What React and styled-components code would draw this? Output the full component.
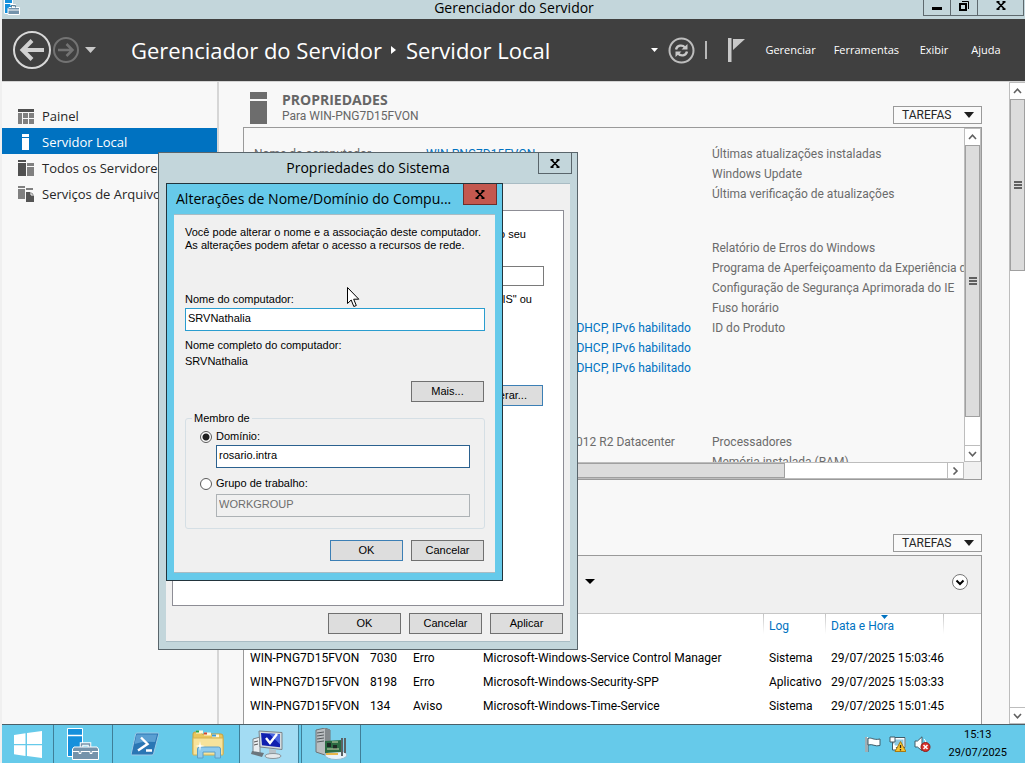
import React from 'react';
import styled, { createGlobalStyle, css } from 'styled-components';

const ui = '"Open Sans", "Noto Sans", sans-serif';
const small = 'Roboto, "Open Sans", sans-serif';
const classic = '"Liberation Sans", Arial, sans-serif';

const c = {
  frame: '#c3d6db',
  dark: '#404040',
  page: '#f8f8f8',
  face: '#f0f0f0',
  blue: '#0072c1',
  sky: '#66caea',
  line: '#9a9a9a',
  bar: '#dcdcdc',
};

const GlobalStyle = createGlobalStyle`
  *, *::before, *::after { box-sizing: border-box; }
  body { margin: 0; background: ${c.face}; font-family: ${small}; font-size: 12px; color: #000; }
  button, input { font: inherit; color: inherit; margin: 0; border-radius: 0; }
  svg { display: block; flex: none; }
`;

const Desktop = styled.div`
  position: relative;
  display: flex;
  flex-direction: column;
  height: 100vh;
  padding-left: 2px;
  overflow: hidden;
`;

/* ---------- server manager window ---------- */
const TitleBar = styled.header`
  display: grid;
  grid-template-columns: 1fr auto 1fr;
  height: 19px;
  flex: none;
  padding: 0 1px 0 2px;
  background: ${c.frame};
`;
const WindowTitle = styled.h1`
  margin: 0;
  font: 400 14px/16px ${ui};
`;
const WindowButtons = styled.div`
  display: flex;
  justify-self: end;
  height: 16px;
`;
const WindowButton = styled.button`
  display: flex;
  align-items: center;
  justify-content: center;
  width: ${(p) => (p.$wide ? 47 : 28)}px;
  margin-left: -1px;
  padding: 0 0 4px;
  border: 1px solid #5e696e;
  border-top: 0;
  background: transparent;
`;

const NavBar = styled.nav`
  display: flex;
  align-items: center;
  flex: none;
  height: 62px;
  padding: 0 22px 0 10px;
  background: ${c.dark};
  color: #fff;
`;
const NavButton = styled.button`
  display: flex;
  align-items: center;
  padding: 0;
  border: 0;
  background: none;
  margin-right: ${(p) => p.$gap || 0}px;
`;
const Crumbs = styled.div`
  display: flex;
  align-items: center;
  gap: 9px;
  flex: 1;
  margin-left: 35px;
  font: 400 22px/30px ${ui};
  white-space: nowrap;
`;
const Divider = styled.span`
  width: 2px;
  height: 18px;
  background: #b8b8b8;
  margin-right: 21px;
`;
const Menu = styled.div`
  display: flex;
  gap: 18px;
  margin-left: 20px;
`;
const MenuItem = styled.button`
  min-width: 34px;
  padding: 0;
  border: 0;
  background: none;
  font: 400 11px/18px ${ui};
  color: #fff;
`;

const Body = styled.div`
  display: flex;
  flex: 1;
  min-height: 0;
  border-top: 1px solid #d4d4d4;
  background: ${c.page};
`;
const Sidebar = styled.aside`
  flex: none;
  width: 217px;
  padding-top: 20px;
  border-right: 2px solid #d6d6d6;
`;
const SideLink = styled.a`
  display: flex;
  align-items: center;
  gap: 8px;
  height: 26px;
  padding: 2px 0 0 16px;
  font: 400 13px/18px ${ui};
  white-space: nowrap;
  text-decoration: none;
  color: ${(p) => (p.$active ? '#fff' : '#262626')};
  background: ${(p) => (p.$active ? c.blue : 'transparent')};
`;
const Content = styled.main`
  flex: 1;
  min-width: 0;
  padding: 9px 27px 0 24px;
  overflow: hidden;
`;
const PanelHead = styled.div`
  display: flex;
  align-items: flex-end;
  gap: 15px;
  height: ${(p) => (p.$spaced ? 75 : 36)}px;
  padding: 0 0 3px 7px;
`;
const PanelTitle = styled.div`
  flex: 1;
  align-self: flex-start;
  color: #666;
`;
const PanelName = styled.h2`
  margin: 0;
  font: 700 14px/17px ${ui};
`;
const PanelSub = styled.div`
  font: 400 12px/17px ${small};
`;
const TasksButton = styled.button`
  display: flex;
  align-items: center;
  justify-content: space-between;
  width: 89px;
  height: 18px;
  margin-left: auto;
  padding: 0 7px 0 8px;
  border: 1px solid ${c.line};
  background: #fafafa;
  color: #262626;
`;

const PropertyPanel = styled.section`
  display: grid;
  grid-template: minmax(0, 1fr) 17px / minmax(0, 1fr) 17px;
  height: 353px;
  border: 1px solid ${c.line};
`;
const Properties = styled.div`
  overflow: hidden;
  padding: 16px 0 0 10px;
`;
const PropertyGroup = styled.div`
  margin-bottom: 34px;
`;
const PropertyRow = styled.div`
  display: grid;
  grid-template-columns: 172px 286px 1fr;
  height: 20px;
  line-height: 20px;
  white-space: nowrap;
  color: #6b6b6b;
`;
const PropLink = styled.a`
  color: ${c.blue};
  text-decoration: none;
`;

const ScrollBar = styled.div`
  display: flex;
  flex: none;
  flex-direction: ${(p) => (p.$horizontal ? 'row' : 'column')};
  ${(p) => (p.$horizontal ? 'height: 17px' : `width: ${p.$page ? 16 : 17}px`)};
  border: 1px solid #bdbdbd;
  border-right-width: ${(p) => (p.$page ? 0 : 1)}px;
  background: #fff;
`;
const ScrollArrow = styled.button`
  display: flex;
  align-items: center;
  justify-content: center;
  flex: none;
  ${(p) => (p.$horizontal ? 'width: 16px' : 'height: 16px')};
  padding: 0;
  border: 0 solid #bdbdbd;
  ${(p) => (p.$horizontal ? 'border-left-width: 1px' : p.$end && 'border-top-width: 1px')};
  background: #fff;
`;
const Thumb = styled.div`
  display: flex;
  align-items: center;
  justify-content: center;
  flex: none;
  border: 1px solid #a0a0a0;
  background: ${c.bar};
  ${(p) => (p.$horizontal ? css`width: ${p.$size};` : css`height: ${p.$size};`)}
`;
const Filler = styled.div`
  flex: 1;
`;
const Corner = styled.div`
  background: ${c.face};
`;

const EventPanel = styled.section`
  border: 1px solid ${c.line};
  background: #fff;
  height: 400px;
`;
const FilterBar = styled.div`
  display: flex;
  align-items: center;
  justify-content: space-between;
  height: 58px;
  padding: 0 12px 6px 341px;
  border-bottom: 1px solid #c6c6c6;
  background: ${c.face};
`;
const EventTable = styled.table`
  width: 100%;
  table-layout: fixed;
  border-collapse: collapse;
  white-space: nowrap;
`;
const HeadCell = styled.th`
  position: relative;
  width: ${(p) => (p.$w ? p.$w + 'px' : 'auto')};
  height: 32px;
  padding: 0 0 8px 6px;
  text-align: left;
  font-weight: 400;
  color: ${c.blue};
  background: ${(p) => (p.$rule ? 'linear-gradient(#c4c4c4, #fff) no-repeat left top / 1px 20px' : 'none')};
`;
const SortMark = styled.svg`
  position: absolute;
  top: 1px;
  left: 56px;
`;
const Cell = styled.td`
  height: 24px;
  padding: 0 0 0 6px;
`;

/* ---------- dialogs ---------- */
const Dialog = styled.section`
  position: absolute;
  display: flex;
  flex-direction: column;
  padding: 0 7px 7px;
  border: 1px solid;
  font: 400 11px/13px ${classic};
  ${(p) =>
    p.$active
      ? css`left: 166px; top: 183px; width: 337px; height: 398px; background: ${c.sky}; border-color: #22343c;`
      : css`left: 158px; top: 152px; width: 420px; height: 498px; background: ${c.frame}; border-color: #59656b;`}
`;
const DialogBar = styled.header`
  display: flex;
  position: relative;
  height: 30px;
  flex: none;
  justify-content: ${(p) => (p.$left ? 'flex-start' : 'center')};
  padding-left: ${(p) => (p.$left ? 2 : 0)}px;
`;
const DialogTitle = styled.h2`
  margin: 0;
  font: 400 14px/30px ${ui};
  white-space: nowrap;
`;
const CloseButton = styled.button`
  position: absolute;
  top: 0;
  right: -2px;
  display: flex;
  align-items: center;
  justify-content: center;
  width: 34px;
  height: 21px;
  padding: 0;
  border: 1px solid ${(p) => (p.$red ? '#6e2f2c' : '#59656b')};
  border-top: 0;
  background: ${(p) => (p.$red ? '#c3584f' : 'transparent')};
`;
const Client = styled.div`
  display: flex;
  flex-direction: column;
  flex: 1;
  border: solid #a9bcc4;
  border-width: 1px 0;
  background: ${c.face};
  padding: ${(p) => p.$pad};
`;
const TabPage = styled.div`
  display: flex;
  flex-direction: column;
  align-items: flex-end;
  height: 396px;
  padding: 17px 19px 0 0;
  border: 1px solid #8d8d95;
  background: #fff;
`;
const TabText = styled.p`
  margin: 0;
  padding-right: ${(p) => p.$inset}px;
  white-space: nowrap;
`;
const TabInput = styled.input`
  width: 230px;
  height: 20px;
  margin: 25px 0 7px;
  border: 1px solid #7a7a7a;
  background: #fff;
`;
const TabAction = styled.div`
  margin: 79px 1px 0 0;
`;
const ButtonRow = styled.div`
  display: flex;
  justify-content: flex-end;
  gap: 8px;
  padding-right: 1px;
  margin-top: ${(p) => p.$top}px;
`;
const Push = styled.button`
  width: 73px;
  height: 21px;
  padding: 0;
  border: 1px solid ${(p) => (p.$default ? '#3c7fb5' : '#707070')};
  background: #dddddd;
`;
const Intro = styled.p`
  margin: 0 0 41px;
  white-space: nowrap;
`;
const TextBox = styled.input`
  display: block;
  width: 100%;
  height: 23px;
  padding: 0 2px 4px;
  border: 1px solid ${(p) => (p.$focus ? '#2a9dcf' : '#2b618f')};
  background: #fff;
  outline: 0;
  &:disabled { border-color: #adb2b5; background: ${c.face}; color: #6d6d6d; }
`;
const FieldLabel = styled.label`
  display: block;
  margin-bottom: 2px;
`;
const FullName = styled.p`
  margin: 6px 0 12px;
  line-height: 16px;
`;
const Group = styled.fieldset`
  margin: 10px 0 0;
  min-width: 0;
  padding: 5px 14px 11px;
  border: 1px solid #d5dfe5;
  border-radius: 3px;
`;
const Legend = styled.legend`
  margin-left: -8px;
  padding: 0 2px;
`;
const Choice = styled.label`
  display: flex;
  align-items: center;
  gap: 4px;
  height: 13px;
`;
const Radio = styled.input`
  appearance: none;
  flex: none;
  width: 12px;
  height: 12px;
  border: 1px solid #5a5a5a;
  border-radius: 50%;
  background: #fff;
  &:checked { background: radial-gradient(circle, #202020 0 3px, #fff 4px); }
`;
const ChoiceField = styled.div`
  padding-left: 16px;
  margin: ${(p) => (p.$after ? 2 : 4)}px 0 ${(p) => p.$after}px;
`;
const Pointer = styled.svg`
  position: absolute;
  left: 347px;
  top: 287px;
`;

/* ---------- taskbar ---------- */
const TaskBar = styled.footer`
  display: flex;
  flex: none;
  height: 39px;
  border-top: 1px solid #4b5f68;
  background: ${c.sky};
`;
const TaskButton = styled.button`
  display: flex;
  align-items: center;
  justify-content: center;
  width: ${(p) => p.$w || 60}px;
  padding: 0;
  margin-left: ${(p) => (p.$gap ? 3 : 0)}px;
  border: 0 solid #3f7f98;
  border-width: 0 ${(p) => (p.$edge ? 1 : 0)}px;
  margin-right: ${(p) => (p.$edge ? -1 : 0)}px;
  background: ${(p) => (p.$tone || 'transparent')};
`;
const Tray = styled.div`
  display: flex;
  align-items: center;
  gap: 8px;
  margin-left: auto;
  padding-right: 18px;
`;
const Clock = styled.time`
  margin-left: 9px;
  font-size: 11px;
  line-height: 18px;
  text-align: center;
`;

/* ---------- drawings ---------- */
const Down = ({ w = 10, h = 6, fill = '#1e1e1e' }) => (
  <svg width={w} height={h}><path d={`M0 0H${w}L${w / 2} ${h}Z`} fill={fill} /></svg>
);
const Cross = () => (
  <svg width="10" height="9"><path d="M1.5 1 8.5 8M8.5 1 1.5 8M.5 .8h3M6.5 .8h3M.5 8.2h3M6.5 8.2h3" stroke="#000" strokeWidth="1.7" /></svg>
);
const chevrons = { up: 'M1 6 4.5 2.2 8 6', down: 'M1 2 4.5 5.8 8 2', right: 'M2.5 .5 6 4 2.5 7.5' };
const Chevron = ({ dir }) => (
  <svg width="9" height="8"><path d={chevrons[dir]} fill="none" stroke="#606060" strokeWidth="1.6" /></svg>
);
const Grip = () => (
  <svg width="8" height="8"><path d="M0 1h8M0 4h8M0 7h8" stroke="#606060" strokeWidth="2" /></svg>
);
const ManagerIcon = ({ w, h, top = 0 }) => (
  <svg width={w} height={h} viewBox={`0 ${top} 32 ${32 - top}`}>
    <path d="M.5 .5h15v28H.5z" fill="#1590dc" stroke="#fff" />
    <path d="M0 7.5h16" stroke="#fff" strokeWidth="1.5" />
    <path d="M14.500 20v-4h8v4" fill="none" stroke="#fff" strokeWidth="3.500" />
    <path d="M14.500 20v-4h8v4" fill="none" stroke="#7493ab" strokeWidth="1.500" />
    <path d="M7 19h23l1.500 2v10.500h-26V21z" fill="#7493ab" stroke="#fff" />
    <path d="M5.500 23.500H12v2h2v-2h9v2h2v-2h6.500" fill="none" stroke="#fff" />
  </svg>
);
const TitleIcon = () => (
  <svg width="17" height="15">
    <path d="M.5 -2h8v15.500h-8z" fill="#1590dc" stroke="#fff" />
    <path d="M0 3.500h9" stroke="#fff" />
    <path d="M6.500 5.500v-1h5v2" fill="none" stroke="#fff" />
    <path d="M5 7.500h10.500v7H4v-6z" fill="#7493ab" stroke="#fff" />
    <path d="M7.500 7.500v-2h4v2" fill="none" stroke="#5e7e97" />
    <path d="M4 10h12" stroke="#fff" />
  </svg>
);
const ServerIcon = ({ fill = '#6d6d6d', w = 17, h = 32 }) => (
  <svg width={w} height={h}><path d={h > 20 ? `M0 0h${w}v7H0zM0 9h${w}v23H0z` : 'M4 0h7v3H4zM4 4h7v12H4z'} fill={fill} /></svg>
);
const PanelIcon = () => (
  <svg width="16" height="15"><path d="M0 0h16v3H0z" fill="#505050" /><path d="M0 4h4v11H0zM5 4h5v5H5zM11 4h5v5h-5zM5 10h5v5H5zM11 10h5v5h-5z" fill="#808080" /></svg>
);
const AllIcon = () => (
  <svg width="16" height="16"><path d="M0 0h8v2H0zM0 3h8v13H0z" fill="#505050" /><path d="M9 3h7v3H9zM9 7h7v9H9z" fill="#808080" /></svg>
);
const FilesIcon = () => (
  <svg width="16" height="16"><path d="M0 0h7v2H0zM0 3h7v10H0zM8 2h7v2H8z" fill="#808080" /><path d="M8 6h5l3 3v7H8z" fill="#555" /><path d="M13 6v3h3" fill="none" stroke="#fff" /></svg>
);

const rows = [
  ['7030', 'Erro', 'Microsoft-Windows-Service Control Manager', 'Sistema', '29/07/2025 15:03:46'],
  ['8198', 'Erro', 'Microsoft-Windows-Security-SPP', 'Aplicativo', '29/07/2025 15:03:33'],
  ['134', 'Aviso', 'Microsoft-Windows-Time-Service', 'Sistema', '29/07/2025 15:01:45'],
];
const dhcp = 'Endereço IPv4 atribuído por DHCP, IPv6 habilitado';
const groups = [
  [
    ['Nome do computador', 'WIN-PNG7D15FVON', 'Últimas atualizações instaladas'],
    ['', '', 'Windows Update'],
    ['', '', 'Última verificação de atualizações'],
  ],
  [
    ['', '', 'Relatório de Erros do Windows'],
    ['', '', 'Programa de Aperfeiçoamento da Experiência do Usuário'],
    ['', '', 'Configuração de Segurança Aprimorada do IE'],
    ['', '', 'Fuso horário'],
    ['', dhcp, 'ID do Produto'],
    ['', dhcp, ''],
    ['', dhcp, ''],
    ['', '', ''],
  ],
  [
    ['', 'Microsoft Windows Server 2012 R2 Datacenter', 'Processadores', true],
    ['', '', 'Memória instalada (RAM)'],
  ],
];

const Tasks = () => <TasksButton>TAREFAS <Down /></TasksButton>;

function ServerManager() {
  return (
    <>
      <TitleBar>
        <TitleIcon />
        <WindowTitle>Gerenciador do Servidor</WindowTitle>
        <WindowButtons>
          <WindowButton aria-label="Minimizar"><svg width="10" height="9"><path d="M0 7.500h10" stroke="#000" strokeWidth="3" /></svg></WindowButton>
          <WindowButton aria-label="Restaurar"><svg width="10" height="10"><path d="M1 3h6v6H1z" fill="none" stroke="#000" strokeWidth="2" /><path d="M3 .5h6.500V8" fill="none" stroke="#000" /></svg></WindowButton>
          <WindowButton $wide aria-label="Fechar"><Cross /></WindowButton>
        </WindowButtons>
      </TitleBar>
      <NavBar>
        <NavButton $gap={1} aria-label="Voltar">
          <svg width="40" height="40"><circle cx="20" cy="20" r="18" fill="none" stroke="#d8d8d8" strokeWidth="2" /><path d="M32 20H11M20 10.500 10.500 20 20 29.500" fill="none" stroke="#d0d0d0" strokeWidth="4" /></svg>
        </NavButton>
        <NavButton $gap={6} aria-label="Avançar">
          <svg width="26" height="26"><circle cx="13" cy="13" r="12" fill="none" stroke="#737373" strokeWidth="2" /><path d="M5 13h14M13.500 7l6 6-6 6" fill="none" stroke="#737373" strokeWidth="2.500" /></svg>
        </NavButton>
        <NavButton aria-label="Histórico"><Down w={11} h={6} fill="#c8c8c8" /></NavButton>
        <Crumbs>
          <span>Gerenciador do Servidor</span>
          <svg width="6" height="8"><path d="M0 0 5 4 0 8z" fill="#fff" /></svg>
          <span>Servidor Local</span>
        </Crumbs>
        <NavButton $gap={10} aria-label="Opções"><Down w={7} h={4} fill="#fff" /></NavButton>
        <NavButton $gap={10} aria-label="Atualizar">
          <svg width="27" height="27"><circle cx="13.500" cy="13.500" r="12" fill="none" stroke="#bdbdbd" strokeWidth="2" /><path d="M8 12.500c1-4.500 6.500-5 9-2M19 14.500c-1 4.500-6.500 5-9 2" fill="none" stroke="#c8c8c8" strokeWidth="2.400" /><path d="M19.500 7v5.500h-6zM7.500 20v-5.500h6z" fill="#c8c8c8" /></svg>
        </NavButton>
        <Divider />
        <NavButton aria-label="Notificações">
          <svg width="17" height="30"><path d="M0 3h3.500v24H0zM5 4h12L5 15z" fill="#c8c8c8" /></svg>
        </NavButton>
        <Menu>
          <MenuItem>Gerenciar</MenuItem>
          <MenuItem>Ferramentas</MenuItem>
          <MenuItem>Exibir</MenuItem>
          <MenuItem>Ajuda</MenuItem>
        </Menu>
      </NavBar>
      <Body>
        <Sidebar>
          <SideLink href="#painel"><PanelIcon />Painel</SideLink>
          <SideLink href="#local" $active><ServerIcon fill="#fff" w={16} h={16} />Servidor Local</SideLink>
          <SideLink href="#todos"><AllIcon />Todos os Servidores</SideLink>
          <SideLink href="#arquivo"><FilesIcon />Serviços de Arquivo</SideLink>
        </Sidebar>
        <Content>
          <PanelHead>
            <ServerIcon />
            <PanelTitle>
              <PanelName>PROPRIEDADES</PanelName>
              <PanelSub>Para WIN-PNG7D15FVON</PanelSub>
            </PanelTitle>
            <Tasks />
          </PanelHead>
          <PropertyPanel>
            <Properties>
              {groups.map((g, i) => (
                <PropertyGroup key={i}>
                  {g.map(([a, b, d, plain], j) => (
                    <PropertyRow key={j}>
                      <span>{a}</span>
                      <span>{plain || !b ? b : <PropLink href="#editar">{b}</PropLink>}</span>
                      <span>{d}</span>
                    </PropertyRow>
                  ))}
                </PropertyGroup>
              ))}
            </Properties>
            <ScrollBar>
              <ScrollArrow aria-label="Acima"><Chevron dir="up" /></ScrollArrow>
              <Thumb $size="272px"><Grip /></Thumb>
              <Filler />
              <ScrollArrow $end aria-label="Abaixo"><Chevron dir="down" /></ScrollArrow>
            </ScrollBar>
            <ScrollBar $horizontal>
              <ScrollArrow $horizontal aria-label="Esquerda" />
              <Thumb $horizontal $size="73%" />
              <Filler />
              <ScrollArrow $horizontal aria-label="Direita"><Chevron dir="right" /></ScrollArrow>
            </ScrollBar>
            <Corner />
          </PropertyPanel>
          <PanelHead $spaced><Tasks /></PanelHead>
          <EventPanel>
            <FilterBar>
              <Down w={10} h={5} fill="#000" />
              <svg width="18" height="18"><circle cx="9" cy="9" r="7.500" fill="#fff" stroke="#777" /><path d="M5.500 7.500 9 11l3.500-3.500" fill="none" stroke="#000" strokeWidth="2" /></svg>
            </FilterBar>
            <EventTable>
              <thead>
                <tr>
                  <HeadCell $w={120} /><HeadCell $w={43} /><HeadCell $w={70} /><HeadCell $w={286} />
                  <HeadCell $w={62} $rule>Log</HeadCell>
                  <HeadCell $w={118} $rule>Data e Hora<SortMark width="7" height="4"><path d="M0 0h7L3.500 4z" fill={c.blue} /></SortMark></HeadCell>
                  <HeadCell $rule />
                </tr>
              </thead>
              <tbody>
                {rows.map((r) => (
                  <tr key={r[0]}>
                    <Cell>WIN-PNG7D15FVON</Cell>
                    {r.map((t) => <Cell key={t}>{t}</Cell>)}
                    <Cell />
                  </tr>
                ))}
              </tbody>
            </EventTable>
          </EventPanel>
        </Content>
        <ScrollBar $page>
          <ScrollArrow aria-label="Acima"><Chevron dir="up" /></ScrollArrow>
          <Thumb $size="172px"><Grip /></Thumb>
          <Filler />
          <ScrollArrow $end aria-label="Abaixo"><Chevron dir="down" /></ScrollArrow>
        </ScrollBar>
      </Body>
    </>
  );
}

function SystemDialog() {
  return (
    <Dialog>
      <DialogBar>
        <DialogTitle>Propriedades do Sistema</DialogTitle>
        <CloseButton aria-label="Fechar"><Cross /></CloseButton>
      </DialogBar>
      <Client $pad="26px 6px 0">
        <TabPage>
          <TabText $inset={18}>O Windows usa as informações a seguir para identificar o seu</TabText>
          <TabInput aria-label="Descrição do computador" />
          <TabText $inset={12}>Por exemplo: "Servidor de Produção IIS" ou</TabText>
          <TabAction><Push $default>Alterar...</Push></TabAction>
        </TabPage>
        <ButtonRow $top={7}>
          <Push>OK</Push><Push>Cancelar</Push><Push>Aplicar</Push>
        </ButtonRow>
      </Client>
    </Dialog>
  );
}

function NameDialog() {
  return (
    <Dialog $active>
      <DialogBar $left>
        <DialogTitle>Alterações de Nome/Domínio do Compu...</DialogTitle>
        <CloseButton $red aria-label="Fechar"><Cross /></CloseButton>
      </DialogBar>
      <Client $pad="11px 10px 0 11px">
        <Intro>Você pode alterar o nome e a associação deste computador.<br />As alterações podem afetar o acesso a recursos de rede.</Intro>
        <FieldLabel htmlFor="pc">Nome do computador:</FieldLabel>
        <TextBox id="pc" $focus defaultValue="SRVNathalia" />
        <FullName>Nome completo do computador:<br />SRVNathalia</FullName>
        <ButtonRow $top={0}><Push>Mais...</Push></ButtonRow>
        <Group>
          <Legend>Membro de</Legend>
          <Choice><Radio type="radio" name="membro" defaultChecked />Domínio:</Choice>
          <ChoiceField $after={9}><TextBox aria-label="Domínio" defaultValue="rosario.intra" /></ChoiceField>
          <Choice><Radio type="radio" name="membro" />Grupo de trabalho:</Choice>
          <ChoiceField $after={0}><TextBox aria-label="Grupo de trabalho" defaultValue="WORKGROUP" disabled /></ChoiceField>
        </Group>
        <ButtonRow $top={11}><Push $default>OK</Push><Push>Cancelar</Push></ButtonRow>
      </Client>
    </Dialog>
  );
}

function Taskbar() {
  return (
    <TaskBar>
      <TaskButton $w={51} aria-label="Iniciar">
        <svg width="28" height="27"><path d="M0 4 11.500 2.300V13H0zM13 2 28 0v13H13zM0 14.300h11.500V25L0 23.300zM13 14.300h15V27L13 25z" fill="#fff" /></svg>
      </TaskButton>
      <TaskButton $edge aria-label="Gerenciador do Servidor"><ManagerIcon w={32} h={32} /></TaskButton>
      <TaskButton $w={65} aria-label="PowerShell">
        <svg width="28" height="24"><path d="M6 1h21q1 0 .7 1.200L22.500 22q-.3 1-1.500 1H1q-1 0-.8-1L4.600 2Q4.900 1 6 1z" fill="#2a76b4" stroke="#9cc9e6" /><path d="M5.500 2.500h20.500L24 10Q12 9 3.500 12z" fill="#5a9fd2" /><path d="M10 5.500l6.500 6.500L7 18.500M15 18.500h6" fill="none" stroke="#fff" strokeWidth="2.400" /></svg>
      </TaskButton>
      <TaskButton $w={62} aria-label="Explorador de Arquivos">
        <svg width="32" height="30"><path d="M1 5q0-2 2-2h5l2 2h19q2 0 2 2v18H1z" fill="#e9c65c" stroke="#c79f3d" /><path d="M4 3h7M12 5h7M20 7h7" stroke="#fff8dc" strokeWidth="3" /><path d="M4 2.500h3" stroke="#29a54a" strokeWidth="2" /><path d="M12 4.500h3" stroke="#d2432f" strokeWidth="2" /><path d="M20 6.500h4" stroke="#3a9bdc" strokeWidth="2" /><path d="M1 9h30v17H1z" fill="#f7e39b" stroke="#d5b250" /><path d="M5.500 29V20q0-2 2-2h19q2 0 2 2v9h-5.500v-6H11v6z" fill="#8fcbee" stroke="#5c9fc8" /><path d="M8 12l.8 4.200 4.200.8-4.200.8L8 22l-.8-4.200L3 17l4.200-.8z" fill="#fff" /></svg>
      </TaskButton>
      <TaskButton $edge $tone="#a3dcf3" aria-label="Propriedades do Sistema">
        <svg width="36" height="30"><path d="M2 10l7-2v17l-7-2z" fill="#e8edf0" stroke="#7b858b" /><path d="M3 13l4-1M3 16l4-1" stroke="#555" /><path d="M8 2l23 1.500v17L9 18z" fill="#d5dce0" stroke="#7b858b" /><path d="M10 4l19 1.200v13L11 16.200z" fill="#1020b0" /><path d="M18 4.500l11 .7v10z" fill="#4a68e0" /><path d="M15 9l4 5 7-9" fill="none" stroke="#fff" strokeWidth="2.400" /><path d="M18 20l7 1v5h-7z" fill="#b8c2c8" /><ellipse cx="22" cy="27" rx="8" ry="2.500" fill="#e4e9ec" stroke="#8a949a" /><path d="M1 22l12 2-2 4-11-3z" fill="#6b767d" /></svg>
      </TaskButton>
      <TaskButton $gap $edge $tone="#7ad0ec" aria-label="Computador">
        <svg width="32" height="32"><path d="M1 2l9-2 5 2v23l-5 2-9-3z" fill="#b9bec0" stroke="#6d7376" /><path d="M10 0l5 2v23l-5 2z" fill="#83898c" /><path d="M2 5l7-1M2 8l7-1M2 11l7-1M2 14l7-1" stroke="#555b5e" /><ellipse cx="21" cy="27" rx="11" ry="4.500" fill="#e8f2f8" stroke="#8db9d0" /><path d="M10 13l17-1v12l-17 1z" fill="#2c6b42" /><path d="M12 15h4v4h-4zM18 17h4v4h-4z" fill="#1e2b25" /><path d="M12 21h12M17 14h6" stroke="#cfd9b0" /><path d="M11 26h12" stroke="#e8b64a" strokeWidth="2" /><path d="M27 10v18M30 10v15" stroke="#5b6265" strokeWidth="2" /></svg>
      </TaskButton>
      <Tray>
        <svg width="16" height="16"><path d="M1.500 1v15" stroke="#fff" strokeWidth="3" /><path d="M1 1v15M3 2v14" stroke="#415c68" /><path d="M3 2.500c4-1.500 5 2 12 .5v6.500c-5 1.500-7-2-12-.5z" fill="#fff" stroke="#415c68" /></svg>
        <svg width="17" height="16"><path d="M4.500 2.500h11v8h-11z" fill="#8cc9e2" stroke="#fff" strokeWidth="2" /><path d="M4 1.500h12v10H4z" fill="none" stroke="#415c68" /><path d="M1 1h5v5H1zM3.500 6v8h5" fill="#fff" stroke="#415c68" /><path d="M11.500 5.500 17 15.500H6z" fill="#f7c331" stroke="#a87a12" /><path d="M11.500 9v3M11.500 13v1.500" stroke="#222" strokeWidth="1.300" /></svg>
        <svg width="17" height="16"><path d="M1 5h2.500L8 .8v14L3.500 11H1z" fill="#fff" stroke="#415c68" /><path d="M10 3q2 2 2 4" fill="none" stroke="#fff" /><circle cx="11.500" cy="11" r="4.500" fill="#d9322b" stroke="#8e1a16" /><path d="M9.500 9l4 4M13.500 9l-4 4" stroke="#fff" strokeWidth="1.500" /></svg>
        <Clock>15:13<br />29/07/2025</Clock>
      </Tray>
    </TaskBar>
  );
}

export default function App() {
  return (
    <Desktop>
      <GlobalStyle />
      <ServerManager />
      <Taskbar />
      <SystemDialog />
      <NameDialog />
      <Pointer width="13" height="21"><path d="M.5 .5v16l3.700-3.500 2.600 6.500 2.500-1-2.600-6.300h5.100z" fill="#fff" stroke="#000" /></Pointer>
    </Desktop>
  );
}
